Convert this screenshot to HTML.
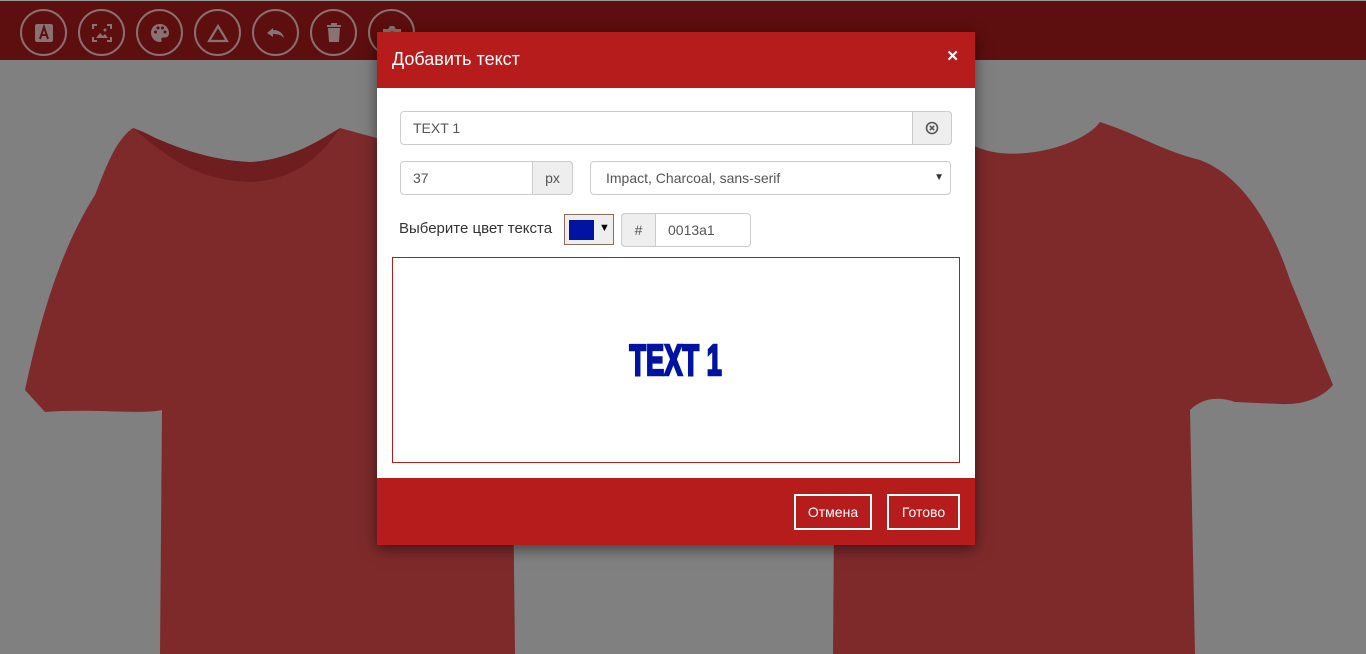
<!DOCTYPE html>
<html><head><meta charset="utf-8"><style>
*{box-sizing:border-box;margin:0;padding:0}
body{width:1366px;height:654px;overflow:hidden;background:#808080;font-family:"Liberation Sans",sans-serif;position:relative}
.bar{position:absolute;left:0;top:0;width:1366px;height:60px;background:#5d0e0e;border-top:1px solid #999}
.btn{position:absolute;top:8px;width:47px;height:47px;border:2px solid #8a7070;border-radius:50%;display:flex;align-items:center;justify-content:center}
.modal{position:absolute;left:377px;top:32px;width:598px;height:513px;background:#fff;box-shadow:0 4px 14px rgba(0,0,0,.5)}
.hd{height:56px;background:#b71c1c;color:#fff;font-size:18px;padding:17px 0 0 15px;position:relative}
.hd .x{position:absolute;right:16px;top:15px;font-size:15px;font-weight:bold}
.inp{position:absolute;border:1px solid #ccc;border-radius:4px;background:#fff;font-size:14px;color:#555;height:34px;line-height:32px}
.add{position:absolute;top:-1px;bottom:-1px;background:#eee;border:1px solid #ccc;text-align:center;color:#555}
.ft{position:absolute;left:0;top:446px;width:598px;height:67px;background:#b71c1c}
.fb{position:absolute;top:16px;height:36px;border:2px solid #fff;color:#fff;font-size:14px;line-height:32px;text-align:center}
</style></head><body>
<svg width="1366" height="654" style="position:absolute;left:0;top:0">
<g fill="#7e2a2b">
<path d="M133,128 C170,140 200,175 250,178 C300,178 320,145 340,128 L420,150 C470,175 520,220 540,280 L560,395 L512,400 L515,654 L160,654 L162,410 C140,415 95,408 45,412 L25,390 C40,320 60,250 95,195 C105,170 115,140 133,128Z"/>
<path d="M1100,122 C1140,135 1160,150 1200,160 C1240,175 1270,220 1290,280 L1333,385 C1320,400 1300,405 1280,404 L1235,402 C1215,395 1200,400 1190,410 L1195,654 L833,654 L835,400 C820,395 800,380 790,350 L820,200 C850,165 900,150 960,135 C990,170 1080,150 1100,122Z"/>
</g>
<path d="M133,128 C160,150 190,180 250,182 C300,180 325,150 340,128 C320,140 290,160 250,162 C200,160 160,140 133,128Z" fill="#6e1e1f"/>
</svg>
<div class="bar">
<div class="btn" style="left:20px"><svg width="20" height="20"><rect x="1" y="1" width="18" height="18" rx="2" fill="#8a7272"/><path d="M6,16 L10,4 L14,16 M7.5,12 H12.5" stroke="#5d0e0e" stroke-width="2" fill="none"/></svg></div>
<div class="btn" style="left:78px"><svg width="22" height="20" fill="none" stroke="#8a7272" stroke-width="2"><path d="M2,6V2H6M16,2H20V6M20,14V18H16M6,18H2V14"/><path d="M5,15 L9,10 L12,13 L14,11 L17,15Z" fill="#8a7272" stroke="none"/><circle cx="14" cy="7" r="1.5" fill="#8a7272" stroke="none"/></svg></div>
<div class="btn" style="left:136px"><svg width="22" height="22"><path d="M11,2 C5,2 2,6 2,11 C2,16 6,20 11,20 C12.5,20 13,19 12.5,18 C12,17 12.5,15.5 14,15.5 H16 C19,15.5 20,13 20,11 C20,6 16,2 11,2Z" fill="#8a7272"/><circle cx="6.5" cy="10" r="1.5" fill="#5d0e0e"/><circle cx="9" cy="6" r="1.5" fill="#5d0e0e"/><circle cx="13.5" cy="6" r="1.5" fill="#5d0e0e"/><circle cx="16" cy="10" r="1.5" fill="#5d0e0e"/></svg></div>
<div class="btn" style="left:194px"><svg width="22" height="20"><path d="M11,3 L20,18 H2Z" fill="none" stroke="#8a7272" stroke-width="2.2"/></svg></div>
<div class="btn" style="left:252px"><svg width="22" height="18"><path d="M8,4 L2,9 L8,13 V10 C13,10 16,11 19,14 C18,9 14,6 8,6Z" fill="#8a7272"/></svg></div>
<div class="btn" style="left:310px"><svg width="16" height="20"><rect x="1" y="2" width="14" height="2" fill="#8a7272"/><rect x="5" y="0" width="6" height="2" fill="#8a7272"/><path d="M2,5 H14 L13,19 H3Z" fill="#8a7272"/></svg></div>
<div class="btn" style="left:368px"><svg width="22" height="20"><path d="M2,6 H7 L9,3 H13 L15,6 H20 V18 H2Z" fill="#8a7272"/><circle cx="11" cy="12" r="3.5" fill="#5d0e0e"/></svg></div>
</div>
<div class="modal">
<div class="hd">Добавить текст<span class="x">✕</span></div>
<div class="inp" style="left:23px;top:79px;width:552px;padding-left:12px">TEXT 1<div class="add" style="right:-1px;width:40px;border-radius:0 4px 4px 0"><svg width="14" height="14" style="margin-top:9px"><circle cx="7" cy="7" r="5.5" fill="none" stroke="#555" stroke-width="1.6"/><path d="M4.8,4.8 L9.2,9.2 M9.2,4.8 L4.8,9.2" stroke="#555" stroke-width="1.6"/></svg></div></div>
<div class="inp" style="left:23px;top:129px;width:173px;padding-left:12px">37<div class="add" style="right:-1px;width:41px;border-radius:0 4px 4px 0">px</div></div>
<div class="inp" style="left:213px;top:129px;width:361px;padding-left:15px">Impact, Charcoal, sans-serif<span style="position:absolute;right:6px;top:0;font-size:10px;color:#333">▼</span></div>
<div style="position:absolute;left:22px;top:188px;font-size:15px;color:#333">Выберите цвет текста</div>
<div style="position:absolute;left:187px;top:182px;width:50px;height:31px;border:1px solid #8b6b5a;background:#eee"><div style="position:absolute;left:4px;top:5px;width:25px;height:20px;background:#0013a1"></div><span style="position:absolute;left:34px;top:7px;font-size:11px">▼</span></div>
<div class="inp" style="left:244px;top:181px;width:130px;padding-left:46px;height:34px">0013a1<div class="add" style="left:-1px;width:35px;border-radius:4px 0 0 4px">#</div></div>
<div style="position:absolute;left:15px;top:225px;width:568px;height:206px;border:1px solid #b71c1c;text-align:center"><span style="display:inline-block;margin-top:78px;font-weight:bold;font-size:44px;line-height:50px;color:#0013a1;-webkit-text-stroke:2.5px #0013a1;transform:scale(0.62,1);letter-spacing:0px">TEXT 1</span></div>
<div class="ft"><div class="fb" style="left:417px;width:78px">Отмена</div><div class="fb" style="left:510px;width:73px">Готово</div></div>
</div>
</body></html>
